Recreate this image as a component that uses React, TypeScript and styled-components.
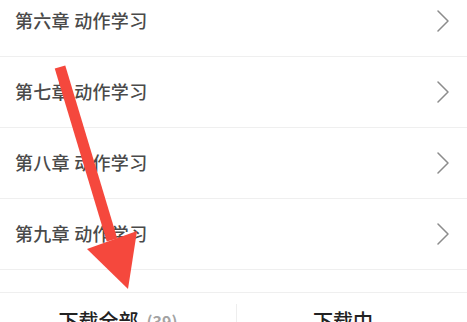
import React from "react";
import styled, { createGlobalStyle } from "styled-components";

const Global = createGlobalStyle`
  html, body { margin: 0; padding: 0; background: #fff; }
  body { width: 467px; height: 322px; overflow: hidden; font-family: "Noto Sans CJK SC", "Noto Sans", sans-serif; }
`;

const Screen = styled.div`
  position: relative;
  width: 467px;
  height: 322px;
  overflow: hidden;
  background: #fff;
  display: flex;
  flex-direction: column;
  & > * { flex-shrink: 0; }
`;

const List = styled.div`
  margin-top: -14px;
  display: flex;
  flex-direction: column;
`;

const Row = styled.div`
  height: 70px;
  border-bottom: 1px solid #efefef;
  display: flex;
  align-items: center;
  justify-content: space-between;
  padding: 0 17px 0 15px;
  box-sizing: content-box;
`;

const Title = styled.span`
  font-size: 18px;
  font-weight: 500;
  color: #4a4a4a;
  letter-spacing: 0.3px;
  line-height: 1;
  margin-top: -3px;
`;

const Spacer = styled.div`
  height: 22px;
  border-bottom: 1px solid #efefef;
  background: #fff;
`;

const BottomBar = styled.div`
  display: grid;
  grid-template-columns: 236px 1fr;
  height: 60px;
`;

const Tab = styled.div<{ $divider?: boolean }>`
  display: flex;
  align-items: flex-start;
  justify-content: center;
  border-left: ${(p) => (p.$divider ? "1px solid #eeeeee" : "none")};
  margin-top: ${(p) => (p.$divider ? "11px" : "0")};
  padding-top: ${(p) => (p.$divider ? "5px" : "16px")};
  padding-right: ${(p) => (p.$divider ? "18px" : "0")};
`;

const TabLabel = styled.span`
  font-size: 20px;
  font-weight: 500;
  color: #222;
  line-height: 1.2;
`;

const Count = styled.span`
  font-size: 16px;
  font-weight: 700;
  color: #a3a3a3;
  margin-left: 8px;
  line-height: 1.5;
`;

const Overlay = styled.svg`
  position: absolute;
  left: 0;
  top: 0;
  pointer-events: none;
`;

const Chevron = () => (
  <svg width="14" height="22" viewBox="0 0 14 22">
    <path d="M2 1 L12 11 L2 21" fill="none" stroke="#8c8c8c" strokeWidth="1.5" strokeLinecap="round" strokeLinejoin="round" />
  </svg>
);

const chapters = ["第六章 动作学习", "第七章 动作学习", "第八章 动作学习", "第九章 动作学习"];

export default function App() {
  return (
    <>
      <Global />
      <Screen>
        <List>
          {chapters.map((c) => (
            <Row key={c}>
              <Title>{c}</Title>
              <Chevron />
            </Row>
          ))}
        </List>
        <Spacer />
        <BottomBar>
          <Tab>
            <TabLabel>下载全部</TabLabel>
            <Count>(39)</Count>
          </Tab>
          <Tab $divider>
            <TabLabel>下载中</TabLabel>
          </Tab>
        </BottomBar>
        <Overlay width="467" height="322" viewBox="0 0 467 322">
          <line x1="60" y1="67" x2="112" y2="240" stroke="#f5483d" strokeWidth="11" />
          <polygon points="87,249 137,231 128,289" fill="#f5483d" />
        </Overlay>
      </Screen>
    </>
  );
}
